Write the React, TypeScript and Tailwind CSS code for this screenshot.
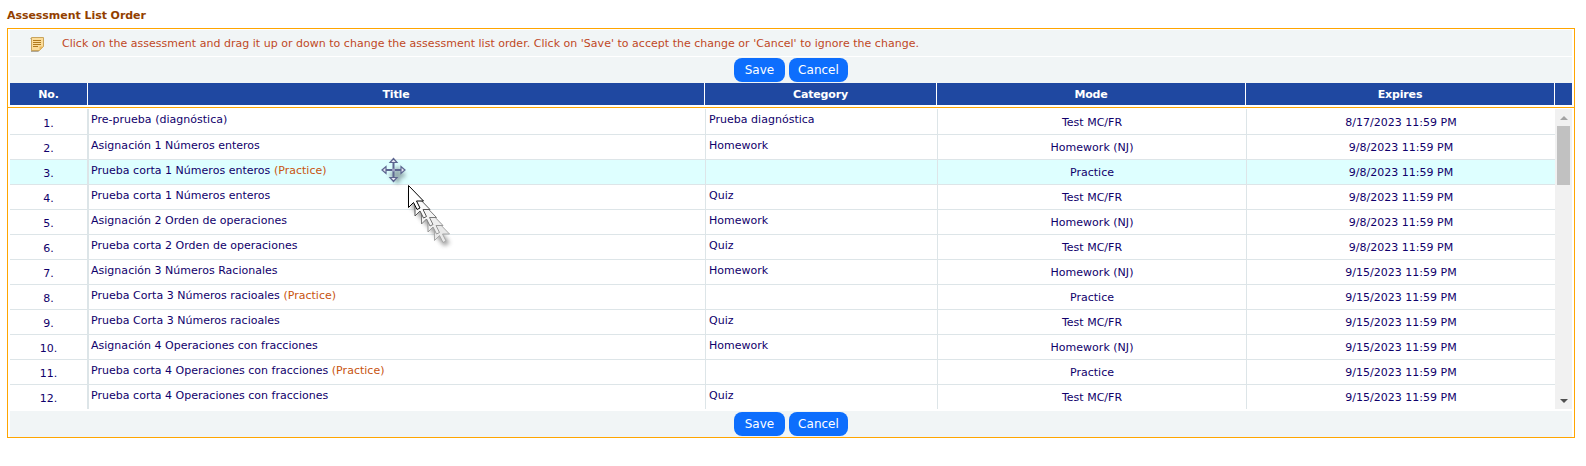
import React from 'react';

type Row = {
    no: number;
    title: string;
    practice?: boolean;
    category: string;
    mode: string;
    expires: string;
};

const rows: Row[] = [
    { no: 1, title: 'Pre-prueba (diagnóstica)', category: 'Prueba diagnóstica', mode: 'Test MC/FR', expires: '8/17/2023 11:59 PM' },
    { no: 2, title: 'Asignación 1 Números enteros', category: 'Homework', mode: 'Homework (NJ)', expires: '9/8/2023 11:59 PM' },
    { no: 3, title: 'Prueba corta 1 Números enteros', practice: true, category: '', mode: 'Practice', expires: '9/8/2023 11:59 PM' },
    { no: 4, title: 'Prueba corta 1 Números enteros', category: 'Quiz', mode: 'Test MC/FR', expires: '9/8/2023 11:59 PM' },
    { no: 5, title: 'Asignación 2 Orden de operaciones', category: 'Homework', mode: 'Homework (NJ)', expires: '9/8/2023 11:59 PM' },
    { no: 6, title: 'Prueba corta 2 Orden de operaciones', category: 'Quiz', mode: 'Test MC/FR', expires: '9/8/2023 11:59 PM' },
    { no: 7, title: 'Asignación 3 Números Racionales', category: 'Homework', mode: 'Homework (NJ)', expires: '9/15/2023 11:59 PM' },
    { no: 8, title: 'Prueba Corta 3 Números racioales', practice: true, category: '', mode: 'Practice', expires: '9/15/2023 11:59 PM' },
    { no: 9, title: 'Prueba Corta 3 Números racioales', category: 'Quiz', mode: 'Test MC/FR', expires: '9/15/2023 11:59 PM' },
    { no: 10, title: 'Asignación 4 Operaciones con fracciones', category: 'Homework', mode: 'Homework (NJ)', expires: '9/15/2023 11:59 PM' },
    { no: 11, title: 'Prueba corta 4 Operaciones con fracciones', practice: true, category: '', mode: 'Practice', expires: '9/15/2023 11:59 PM' },
    { no: 12, title: 'Prueba corta 4 Operaciones con fracciones', category: 'Quiz', mode: 'Test MC/FR', expires: '9/15/2023 11:59 PM' },
];

const flecha = 'M0 0v22l5-5 3.500 7 3-1.500-3.500-7h7z';

function Botones() {
    return (
        <div className="flex justify-center gap-[4px]">
            <button className="w-[51px] h-[24px] bg-[#0d6efd] text-white text-[12px] rounded-[8px] cursor-pointer">Save</button>
            <button className="w-[59px] h-[24px] bg-[#0d6efd] text-white text-[12px] rounded-[8px] cursor-pointer">Cancel</button>
        </div>
    );
}

function NotaIcon() {
    return (
        <svg width="14" height="15" viewBox="0 0 14 15" className="block">
            <path d="M0 1h1v14h9l-1 0z" fill="#b0a898" />
            <path d="M1.500 .5h12v9l-4 4h-8z" fill="#fbdc9a" stroke="#c9a45c" strokeWidth="1" />
            <path d="M3 3.500h8M3 5.500h8M3 7.500h8M3 9.500h5" stroke="#b07a1e" strokeWidth="1" />
            <path d="M9.500 13.500v-4h4z" fill="#e8b860" />
        </svg>
    );
}

function CursoresArrastre() {
    return (
        <svg width="90" height="100" viewBox="0 0 90 100" className="absolute left-[370px] top-[46px] pointer-events-none overflow-visible">
            <defs>
                <filter id="sombra" x="-50%" y="-50%" width="200%" height="200%">
                    <feGaussianBlur stdDeviation="2" />
                </filter>
            </defs>
            {/* sombras */}
            <path d="M6 15h15M13.500 7v16" stroke="#55656a" strokeWidth="5" opacity="0.55" filter="url(#sombra)" transform="translate(4 5)" />
            <path d="M30 36l40 52-6 3-32-38z" fill="#666" opacity="0.6" filter="url(#sombra)" />
            {/* cruz de mover */}
            <path d="M6 15h15M13.500 7.500v15" stroke="#5d6690" strokeWidth="2" />
            <path d="M13.500 3.500l3.500 4h-7zM13.500 26.500l3.500-4h-7zM2 15l4-3.500v7zM25 15l-4-3.500v7z" fill="#e4e6f2" stroke="#5d6690" strokeWidth="1.200" />
            <circle cx="13.500" cy="15" r="1.500" fill="#a3a7c6" />
            {/* estela del cursor */}
            <path d={flecha} transform="translate(54.500 63.500)" fill="#e8e8e8" stroke="#a8a8a8" />
            <path d={flecha} transform="translate(48 55)" fill="#eeeeee" stroke="#999999" />
            <path d={flecha} transform="translate(41.500 47)" fill="#f4f4f4" stroke="#7a7a7a" />
            <path d={flecha} transform="translate(35 39)" fill="#fafafa" stroke="#555555" />
            <path d={flecha} transform="translate(28.500 30.500)" fill="#ffffff" stroke="#000000" />
        </svg>
    );
}

export default function AssessmentListOrder() {
    return (
        <div className="min-h-screen bg-white pl-[7px] pr-[11px] pt-[9px] font-['DejaVu_Sans',Verdana,sans-serif] text-[11px] tracking-[0.02px]">
            <h1 className="text-[11px] font-bold leading-[13px] tracking-[-0.05px] text-[#933f00] mb-[6px]">Assessment List Order</h1>

            <div className="border border-[#ffa500] pt-[1px] px-[2px] h-[410px]">
                <div className="flex items-center h-[26px] bg-[#f1f5f6] pl-[20px] pt-[2px]">
                    <NotaIcon />
                    <span className="ml-[18px] text-[#c0481f]">
                        Click on the assessment and drag it up or down to change the assessment list order. Click on 'Save' to accept the change or 'Cancel' to ignore the change.
                    </span>
                </div>
                <div className="h-[26px] mt-px bg-[#f1f5f6] flex items-center justify-center">
                    <Botones />
                </div>

                <div className="flex h-[22px] bg-[#1f48a1] text-white font-bold leading-[23px] tracking-[-0.15px] text-center divide-x divide-white">
                    <div className="w-[78px]">No.</div>
                    <div className="w-[617px]">Title</div>
                    <div className="w-[232px]">Category</div>
                    <div className="w-[309px]">Mode</div>
                    <div className="w-[309px]">Expires</div>
                    <div className="flex-1" />
                </div>

                <div className="-mx-[2px] mt-[2px] border-t border-[#ffa500]" />

                <div className="relative flex h-[300px] mt-px">
                    <div className="flex-1">
                        {rows.map(r => {
                            const primera = r.no === 1;
                            const ultima = r.no === 12;
                            return (
                                <div
                                    key={r.no}
                                    className={`flex text-[#10006b] ${primera ? 'h-[26px]' : ultima ? 'h-[24px]' : 'h-[25px]'} ${ultima ? '' : 'border-b border-[#dde5e8]'} ${r.no === 3 ? 'bg-[#deffff]' : 'bg-white'}`}
                                >
                                    <div className={`w-[77px] text-center ${primera ? 'pt-[7px]' : 'pt-[6px]'}`}>{r.no}.</div>
                                    <div className="w-[618px] border-l-2 border-[#dde5e8] pl-[2px] pt-[3px]">
                                        {r.title}
                                        {r.practice && <span className="text-[#c8540f]"> (Practice)</span>}
                                    </div>
                                    <div className="w-[232px] border-l border-[#dde5e8] pl-[3px] pt-[3px]">{r.category}</div>
                                    <div className={`w-[309px] border-l border-[#dde5e8] text-center ${primera ? 'pt-[6px]' : 'pt-[5px]'}`}>{r.mode}</div>
                                    <div className={`flex-1 border-l border-[#dde5e8] text-center ${primera ? 'pt-[6px]' : 'pt-[5px]'}`}>{r.expires}</div>
                                </div>
                            );
                        })}
                    </div>
                    <div className="w-[17px] bg-[#f1f1f1] flex flex-col items-center">
                        <div className="h-[17px] flex items-center justify-center">
                            <div className="w-0 h-0 border-x-[4px] border-x-transparent border-b-[4px] border-b-[#a3a3a3]" />
                        </div>
                        <div className="w-[13px] h-[59px] bg-[#c1c1c1]" />
                        <div className="mt-auto h-[17px] flex items-center justify-center">
                            <div className="w-0 h-0 border-x-[4px] border-x-transparent border-t-[4px] border-t-[#505050]" />
                        </div>
                    </div>
                    <CursoresArrastre />
                </div>

                <div className="h-[26px] bg-[#f1f5f6] mt-[2px] flex items-center justify-center">
                    <Botones />
                </div>
            </div>
        </div>
    );
}
